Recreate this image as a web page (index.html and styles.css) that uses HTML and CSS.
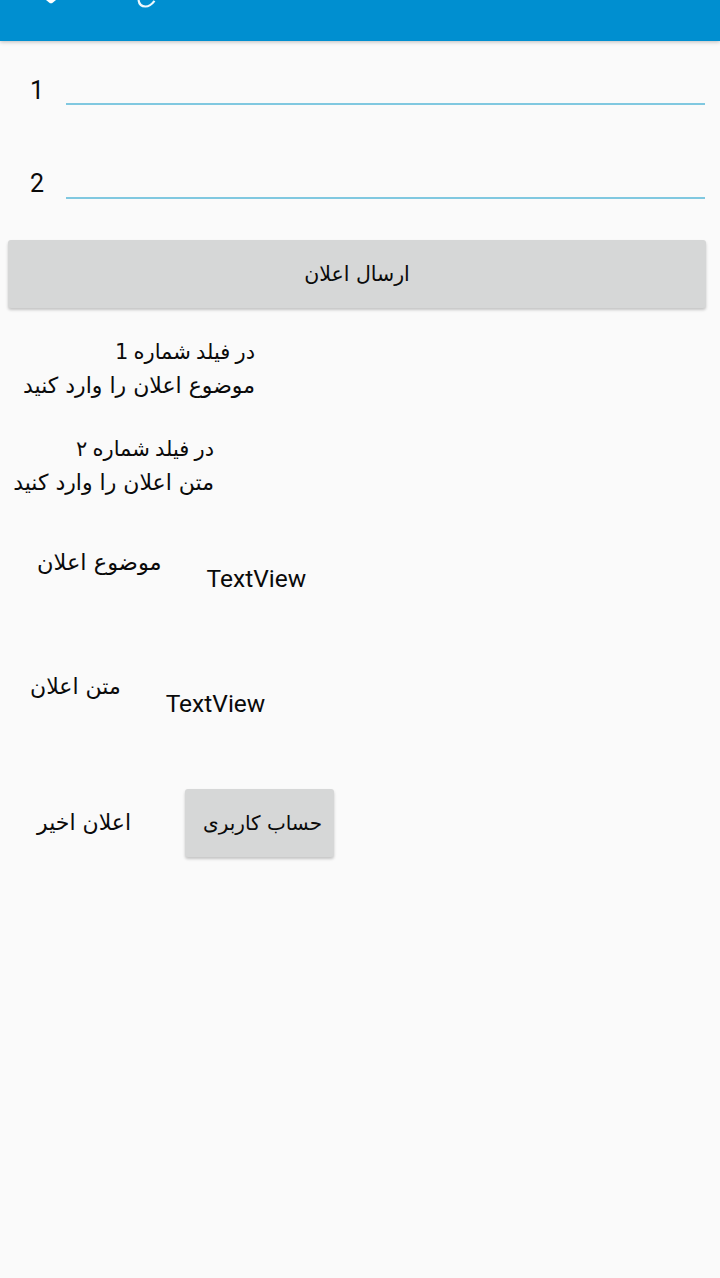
FILE: index.html
```html
<!DOCTYPE html>
<html lang="fa">
<head>
    <meta charset="UTF-8">
    <meta name="viewport" content="width=device-width, initial-scale=1.0">
    <title>اعلان</title>
    <link rel="stylesheet" href="styles.css">
</head>
<body>
    <header class="app-bar">
        <svg class="title-clip" width="160" height="10" viewBox="0 0 160 10">
            <path d="M46 0h10l-4 3.200h-2z" fill="#fff"/>
            <path d="M138.500 0c0.600 4 3 6.500 7 6.500c3.800 0 6.300-2.200 9-5.700" fill="none" stroke="#eef8fc" stroke-width="2.200"/>
        </svg>
    </header>

    <main class="content">
        <div class="field field-one">
            <span class="field-num">1</span>
            <div class="field-line"></div>
        </div>
        <div class="field field-two">
            <span class="field-num">2</span>
            <div class="field-line"></div>
        </div>

        <button class="btn btn-wide">ارسال اعلان</button>

        <p class="hint hint-one" dir="rtl"><span class="hint-head">در فیلد شماره 1</span><br>موضوع اعلان را وارد کنید</p>
        <p class="hint hint-two" dir="rtl"><span class="hint-head">در فیلد شماره ۲</span><br>متن اعلان را وارد کنید</p>

        <div class="row row-subject">
            <span class="label">موضوع اعلان</span>
            <span class="value">TextView</span>
        </div>
        <div class="row row-text">
            <span class="label">متن اعلان</span>
            <span class="value">TextView</span>
        </div>
        <div class="row row-last">
            <span class="label">اعلان اخیر</span>
            <button class="btn btn-small">حساب کاربری</button>
        </div>
    </main>
</body>
</html>
```

FILE: styles.css
```css
html, body {
    height: 100%;
}
body {
    margin: 0;
    padding: 0;
    background-color: #fafafa;
    color: #0a0a0a;
    font-family: Roboto, "DejaVu Sans", sans-serif;
    overflow: hidden;
}
.app-bar {
    height: 41px;
    background-color: #008fd0;
    box-shadow: 0 1px 4px rgba(0, 0, 0, 0.25);
}
.title-clip {
    display: block;
}
.content {
    display: flex;
    flex-direction: column;
    align-items: flex-start;
}
.field {
    display: flex;
    align-items: flex-end;
    width: 705px;
}
.field-one {
    height: 64px;
}
.field-two {
    height: 94px;
}
.field-num {
    width: 66px;
    padding-left: 30px;
    box-sizing: border-box;
    font-size: 25px;
    line-height: 30px;
    margin-bottom: -1px;
}
.field-two .field-num {
    margin-bottom: 0;
}
.field-line {
    flex: 1;
    height: 2px;
    background-color: #80c8e0;
}
.btn {
    display: block;
    border: none;
    border-radius: 3px;
    background-color: #d6d7d7;
    color: #0a0a0a;
    font-family: "DejaVu Sans", sans-serif;
    font-size: 20.500px;
    box-shadow: 0 2px 3px rgba(0, 0, 0, 0.22);
    padding: 0;
}
.btn-wide {
    width: 698px;
    height: 68px;
    margin: 41px 0 0 8px;
}
.hint {
    margin: 0;
    font-family: "DejaVu Sans", sans-serif;
    font-size: 22px;
    line-height: 34px;
}
.hint-head {
    font-size: 21px;
    word-spacing: -1.500px;
}
.hint-one {
    margin: 27px 0 0 0;
    width: 255px;
}
.hint-two {
    margin-top: 29px;
    width: 214px;
}
.row {
    display: flex;
}
.label {
    font-family: "DejaVu Sans", sans-serif;
    font-size: 22px;
    line-height: 34px;
}
.value {
    font-size: 24.500px;
    line-height: 30px;
}
.row-subject {
    margin: 45px 0 0 37px;
}
.row-subject .label {
    font-size: 22.500px;
}
.row-subject .value {
    margin: 19px 0 0 45px;
}
.row-text {
    margin: 76px 0 0 30px;
}
.row-text .value {
    margin: 19px 0 0 45px;
}
.row-last {
    align-items: center;
    margin: 70px 0 0 37px;
}
.btn-small {
    width: 149px;
    height: 68px;
    margin-left: 54px;
    padding-left: 6px;
    font-size: 20px;
}
```
